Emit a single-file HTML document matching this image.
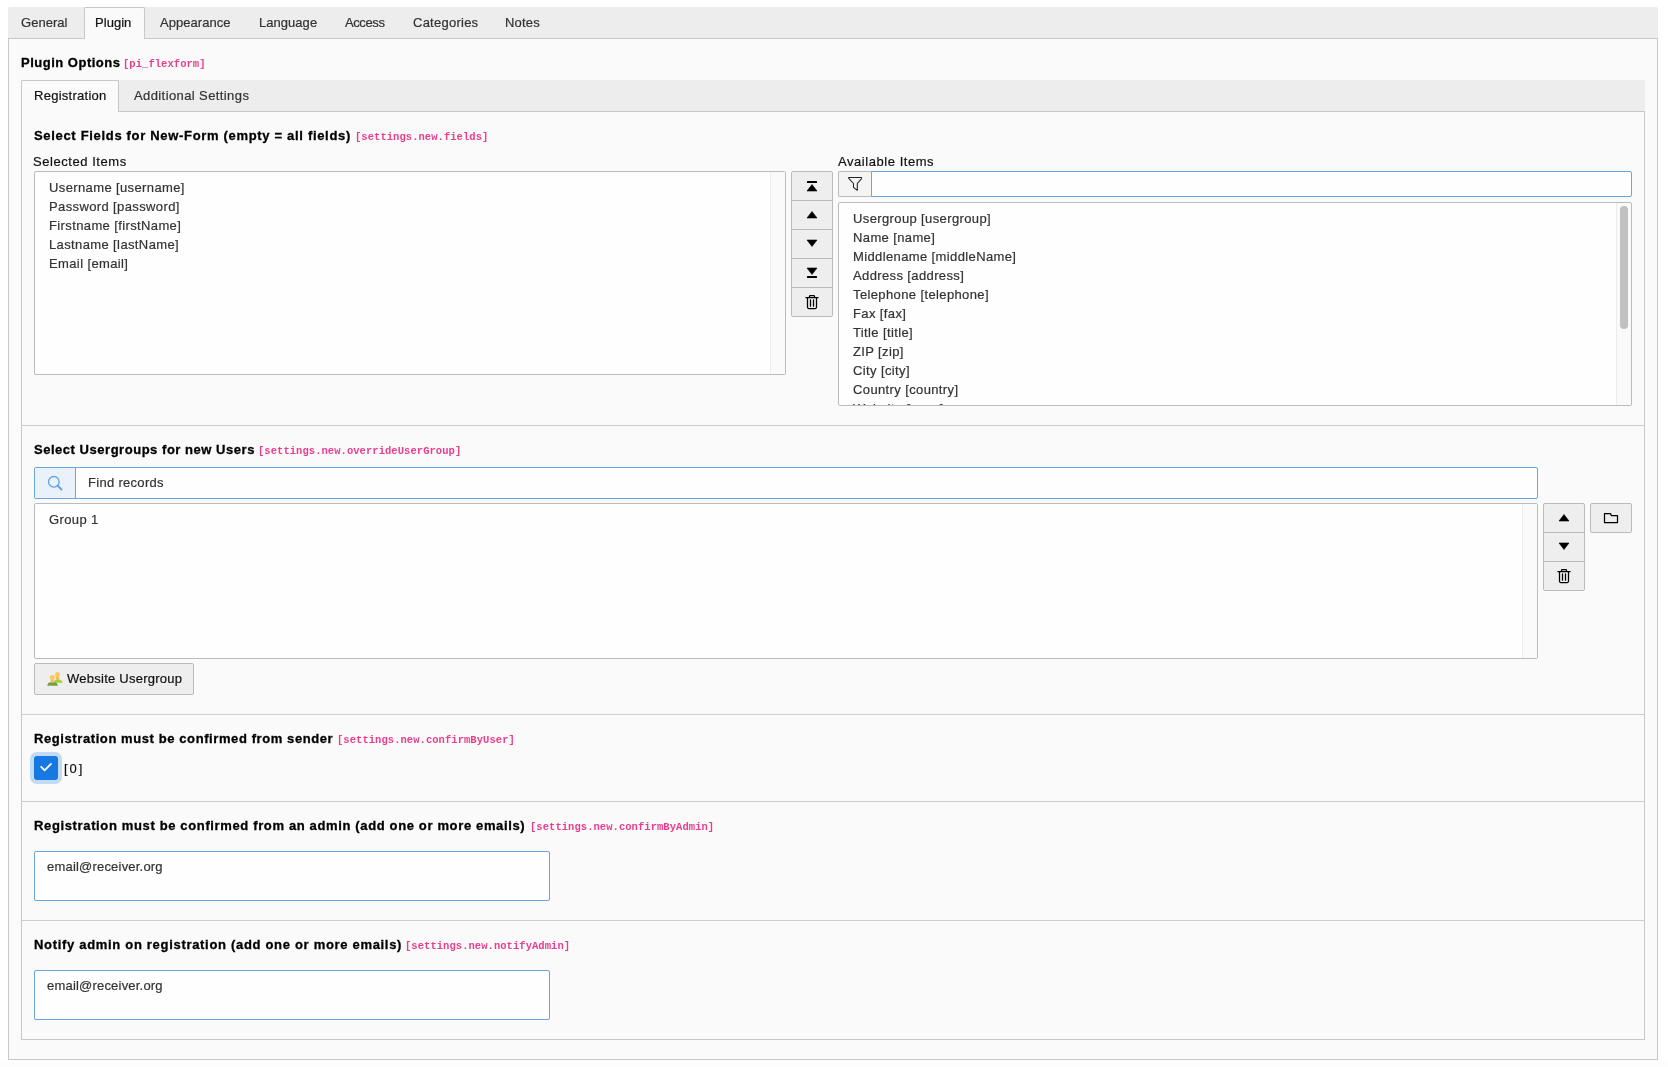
<!DOCTYPE html>
<html><head><meta charset="utf-8">
<style>
#root{position:absolute;left:0;top:0;width:1668px;height:1067px;will-change:transform}
*{box-sizing:border-box;margin:0;padding:0}
html,body{width:1668px;height:1067px;overflow:hidden;background:#fff}
body{position:relative;font-family:"Liberation Sans",sans-serif;font-size:13px;line-height:15px;color:#333}
.a{position:absolute}
.t{position:absolute;white-space:pre;line-height:15px;font-size:13px;-webkit-text-stroke:0.2px currentColor}
.b{font-weight:bold;color:#000;letter-spacing:0.62px;-webkit-text-stroke:0.3px #000}
.c{position:absolute;white-space:pre;line-height:15px;font-family:"Liberation Mono",monospace;font-size:10.5px;font-weight:bold;color:#e83e8c;letter-spacing:0.05px;margin-top:2px}
.tab{color:#333;letter-spacing:0.04px}
.li{color:#333;letter-spacing:0.38px}
.lbl{color:#111;letter-spacing:0.37px}
.bar{position:absolute;background:#ededed;border-bottom:1px solid #c8c8c8}
.atab{position:absolute;background:#fafafa;border:1px solid #c8c8c8;border-bottom:none;border-radius:2px 2px 0 0}
.box{position:absolute;background:#fefefe;border:1px solid #bbb;border-radius:2px}
.trk{position:absolute;top:0;bottom:0;width:15px;background:#fafafa;border-left:1px solid #ececec}
.bg{position:absolute;background:#eee;border:1px solid #bbb;border-radius:2px}
.bsep{position:absolute;left:0;right:0;height:1px;background:#bbb}
.div{position:absolute;left:22px;width:1622px;height:1px;background:#cdcdcd}
.inp{position:absolute;background:#fefefe;border:1px solid #6aa5dd;border-radius:2px}
svg{position:absolute;overflow:visible}
</style></head><body><div id="root">

<div class="a" style="left:0;top:1060px;width:1668px;height:7px;background:#fdfdfd"></div>
<!-- outer tab bar -->
<div class="bar" style="left:8px;top:7px;width:1650px;height:32px;border-radius:2px 2px 0 0"></div>
<div class="atab" style="left:84px;top:7px;width:61px;height:32px"></div>
<div class="t tab" style="left:21px;top:15px">General</div>
<div class="t tab" style="left:95px;top:15px;color:#111">Plugin</div>
<div class="t tab" style="left:160px;top:15px">Appearance</div>
<div class="t tab" style="left:259px;top:15px">Language</div>
<div class="t tab" style="left:345px;top:15px;letter-spacing:-0.4px">Access</div>
<div class="t tab" style="left:413px;top:15px;letter-spacing:0.25px">Categories</div>
<div class="t tab" style="left:505px;top:15px;letter-spacing:0.2px">Notes</div>

<!-- outer panel -->
<div class="a" style="left:8px;top:39px;width:1650px;height:1021px;background:#fafafa;border:1px solid #c8c8c8;border-top:none"></div>

<div class="t b" style="left:21px;top:55px;letter-spacing:0.5px">Plugin Options</div>
<div class="c" style="left:123px;top:55px">[pi_flexform]</div>

<!-- inner tab bar -->
<div class="bar" style="left:21px;top:80px;width:1624px;height:32px;border-radius:2px 2px 0 0"></div>
<div class="atab" style="left:21px;top:80px;width:98px;height:32px"></div>
<div class="t tab" style="left:34px;top:88px;color:#111;letter-spacing:0.27px">Registration</div>
<div class="t tab" style="left:134px;top:88px;letter-spacing:0.4px">Additional Settings</div>

<!-- inner panel -->
<div class="a" style="left:21px;top:112px;width:1624px;height:928px;background:#fafafa;border:1px solid #c8c8c8;border-top:none"></div>

<!-- SECTION 1 -->
<div class="t b" style="left:34px;top:128px;letter-spacing:0.68px">Select Fields for New-Form (empty = all fields)</div>
<div class="c" style="left:355px;top:128px">[settings.new.fields]</div>

<div class="t lbl" style="left:33px;top:154px;letter-spacing:0.55px">Selected Items</div>
<div class="box" style="left:34px;top:171px;width:752px;height:204px"><div class="trk" style="left:735px"></div></div>
<div class="t li" style="left:49px;top:180px">Username [username]</div>
<div class="t li" style="left:49px;top:199px">Password [password]</div>
<div class="t li" style="left:49px;top:218px">Firstname [firstName]</div>
<div class="t li" style="left:49px;top:237px">Lastname [lastName]</div>
<div class="t li" style="left:49px;top:256px">Email [email]</div>

<div class="bg" style="left:791px;top:171px;width:42px;height:146px">
  <div class="bsep" style="top:28px"></div>
  <div class="bsep" style="top:57px"></div>
  <div class="bsep" style="top:86px"></div>
  <div class="bsep" style="top:115px"></div>
</div>

<div class="t lbl" style="left:838px;top:154px;letter-spacing:0.55px">Available Items</div>
<div class="a" style="left:838px;top:171px;width:34px;height:26px;background:#f4f4f4;border:1px solid #bbb;border-right:none;border-radius:2px 0 0 2px"></div>
<div class="inp" style="left:871px;top:171px;width:761px;height:26px;border-radius:0 2px 2px 0"></div>
<div class="box" style="left:838px;top:202px;width:794px;height:204px;overflow:hidden">
  <div class="trk" style="left:777px"><div class="a" style="left:3px;top:3px;width:8px;height:123px;background:#c1c1c1;border-radius:4px"></div></div>
</div>
<div class="a" style="left:839px;top:203px;width:777px;height:202px;overflow:hidden">
  <div class="t li" style="left:14px;top:8px">Usergroup [usergroup]</div>
  <div class="t li" style="left:14px;top:27px">Name [name]</div>
  <div class="t li" style="left:14px;top:46px">Middlename [middleName]</div>
  <div class="t li" style="left:14px;top:65px">Address [address]</div>
  <div class="t li" style="left:14px;top:84px">Telephone [telephone]</div>
  <div class="t li" style="left:14px;top:103px">Fax [fax]</div>
  <div class="t li" style="left:14px;top:122px">Title [title]</div>
  <div class="t li" style="left:14px;top:141px">ZIP [zip]</div>
  <div class="t li" style="left:14px;top:160px">City [city]</div>
  <div class="t li" style="left:14px;top:179px">Country [country]</div>
  <div class="t li" style="left:14px;top:198px">Website [www]</div>
</div>

<div class="div" style="top:425px"></div>

<!-- SECTION 2 -->
<div class="t b" style="left:34px;top:442px;letter-spacing:0.53px">Select Usergroups for new Users</div>
<div class="c" style="left:258px;top:442px">[settings.new.overrideUserGroup]</div>

<div class="inp" style="left:34px;top:467px;width:1504px;height:32px"></div>
<div class="a" style="left:35px;top:468px;width:41px;height:30px;background:#e9f1fb;border-right:1px solid #6aa5dd"></div>
<div class="t li" style="left:88px;top:475px;letter-spacing:0.3px">Find records</div>

<div class="box" style="left:34px;top:503px;width:1504px;height:156px"><div class="trk" style="left:1487px"></div></div>
<div class="t li" style="left:49px;top:512px">Group 1</div>

<div class="bg" style="left:1543px;top:503px;width:42px;height:88px">
  <div class="bsep" style="top:28px"></div>
  <div class="bsep" style="top:57px"></div>
</div>
<div class="bg" style="left:1590px;top:503px;width:42px;height:30px"></div>

<div class="bg" style="left:34px;top:663px;width:160px;height:32px"></div>
<div class="t li" style="left:67px;top:671px;color:#111;letter-spacing:0.25px">Website Usergroup</div>

<div class="div" style="top:714px"></div>

<!-- SECTION 3 -->
<div class="t b" style="left:34px;top:731px;letter-spacing:0.59px">Registration must be confirmed from sender</div>
<div class="c" style="left:337px;top:731px">[settings.new.confirmByUser]</div>
<div class="a" style="left:30px;top:752px;width:32px;height:32px;background:#c3daf4;border-radius:7px"></div>
<div class="a" style="left:34px;top:756px;width:24px;height:24px;background:#1679e2;border-radius:3px"></div>
<div class="t li" style="left:64px;top:761px;color:#111;letter-spacing:1.9px">[0]</div>

<div class="div" style="top:801px"></div>

<!-- SECTION 4 -->
<div class="t b" style="left:34px;top:818px;letter-spacing:0.64px">Registration must be confirmed from an admin (add one or more emails)</div>
<div class="c" style="left:530px;top:818px">[settings.new.confirmByAdmin]</div>
<div class="inp" style="left:34px;top:851px;width:516px;height:50px"></div>
<div class="t li" style="left:47px;top:859px;letter-spacing:0.2px">email@receiver.org</div>

<div class="div" style="top:920px"></div>

<!-- SECTION 5 -->
<div class="t b" style="left:34px;top:937px;letter-spacing:0.69px">Notify admin on registration (add one or more emails)</div>
<div class="c" style="left:405px;top:937px">[settings.new.notifyAdmin]</div>
<div class="inp" style="left:34px;top:970px;width:516px;height:50px"></div>
<div class="t li" style="left:47px;top:978px;letter-spacing:0.2px">email@receiver.org</div>

<!-- ICONS -->
<svg style="left:0;top:0" width="1668" height="1067" viewBox="0 0 1668 1067">
 <g fill="#000">
  <!-- move top -->
  <rect x="807" y="181" width="10" height="2" rx="0.5"/>
  <path d="M812 184.5 L817 191 L807 191 Z" stroke="#000" stroke-width="0.6" stroke-linejoin="round"/>
  <!-- up -->
  <path d="M812 211.5 L817 218 L807 218 Z" stroke="#000" stroke-width="0.6" stroke-linejoin="round"/>
  <!-- down -->
  <path d="M807 240 L817 240 L812 246.5 Z" stroke="#000" stroke-width="0.6" stroke-linejoin="round"/>
  <!-- move bottom -->
  <path d="M807 268 L817 268 L812 274.5 Z" stroke="#000" stroke-width="0.6" stroke-linejoin="round"/>
  <rect x="807" y="276" width="10" height="2" rx="0.5"/>
  <!-- up 2 -->
  <path d="M1564 514.5 L1569 521 L1559 521 Z" stroke="#000" stroke-width="0.6" stroke-linejoin="round"/>
  <!-- down 2 -->
  <path d="M1559 543 L1569 543 L1564 549.5 Z" stroke="#000" stroke-width="0.6" stroke-linejoin="round"/>
 </g>
 <g fill="none" stroke="#000" stroke-width="1.1">
  <!-- trash 1 -->
  <path d="M805.9 297.5 H818.1 M809.5 297.5 V296.3 Q809.5 295.5 810.3 295.5 H813.7 Q814.5 295.5 814.5 296.3 V297.5 M807.5 297.5 V307.3 Q807.5 308.5 808.7 308.5 H815.3 Q816.5 308.5 816.5 307.3 V297.5 M810.5 299.8 V306.2 M813.5 299.8 V306.2" stroke-width="1.25" stroke-linecap="round"/>
  <!-- trash 2 -->
  <path d="M1557.9 571.5 H1570.1 M1561.5 571.5 V570.3 Q1561.5 569.5 1562.3 569.5 H1565.7 Q1566.5 569.5 1566.5 570.3 V571.5 M1559.5 571.5 V581.3 Q1559.5 582.5 1560.7 582.5 H1567.3 Q1568.5 582.5 1568.5 581.3 V571.5 M1562.5 573.8 V580.2 M1565.5 573.8 V580.2" stroke-width="1.25" stroke-linecap="round"/>
  <!-- folder -->
  <path d="M1604.5 522.5 V513.5 H1610.5 L1611.3 515.5 H1617.5 V522.5 Z" stroke-width="1.25" stroke-linejoin="round"/>
  <!-- filter -->
  <path d="M848.8 177.5 H861.2 Q862 177.8 861.3 178.8 L857.3 183.5 V190.3 L853.5 187.3 V183.5 L849.2 178.8 Q848.3 177.8 848.8 177.5 Z" stroke="#222" stroke-width="1.05" stroke-linejoin="round"/>
 </g>
 <!-- search -->
 <g fill="none" stroke="#67a3dc">
  <circle cx="53.8" cy="481.8" r="5.3" stroke-width="1.3"/>
  <path d="M57.8 485.8 L61.5 489.5" stroke-width="2" stroke-linecap="round"/>
 </g>
 <!-- check -->
 <path d="M41.2 766.8 L44.6 770.3 L51 763.9" fill="none" stroke="#fff" stroke-width="1.8" stroke-linecap="round" stroke-linejoin="round"/>
 <!-- usergroup icon -->
 <g>
  <path d="M53.6 682.8 Q54.5 679.6 56 679.4 H59.5 Q61.5 679.6 62.9 682.8 Z" fill="#a4d12b"/>
  <rect x="56.1" y="676" width="2.8" height="3.8" rx="1" fill="#f2b64e"/>
  <ellipse cx="57.5" cy="674.6" rx="2.4" ry="2.7" fill="#fdc65f"/>
  <path d="M47.1 685.8 Q48 682.6 49.6 682.3 H55.5 Q57.2 682.6 58 685.8 Z" fill="#6fa243"/>
  <rect x="50.9" y="679" width="2.8" height="3.9" rx="1" fill="#f2b64e"/>
  <ellipse cx="52.35" cy="677.6" rx="2.4" ry="2.7" fill="#fdc65f"/>
 </g>
</svg>
</div></body></html>
